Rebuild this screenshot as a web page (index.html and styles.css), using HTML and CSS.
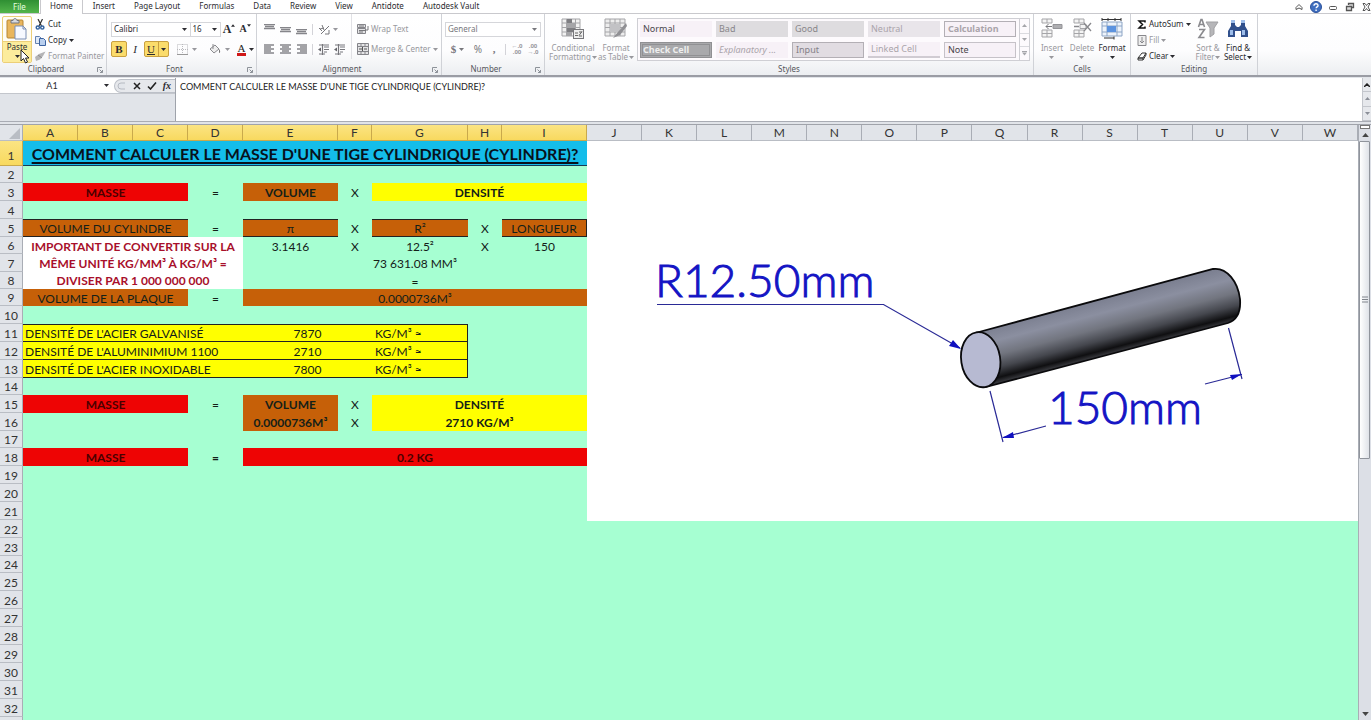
FILE: index.html
```html
<!DOCTYPE html>
<html lang="fr">
<head>
<meta charset="utf-8">
<title>Masse d'une tige cylindrique</title>
<link rel="stylesheet" href="styles.css">
</head>
<body>
<svg class="defs" aria-hidden="true">
  <symbol id="launcher" viewBox="0 0 6 6"><path d="M.5 5V.5H5M2.5 2.5l3 3M5.500 3v2.500H3" fill="none" stroke="#8d9299"/></symbol>
  <symbol id="caret" viewBox="0 0 5 3"><path d="M0 0h5L2.500 3z" fill="currentColor"/></symbol>
  <symbol id="up" viewBox="0 0 5 3"><path d="M0 3h5L2.500 0z" fill="currentColor"/></symbol>
  <symbol id="lines" viewBox="0 0 11 6"><path d="M0 .5h11M1 2.500h9M0 4.500h11" stroke="#85858a" stroke-width="1.500"/></symbol>
  <symbol id="left" viewBox="0 0 11 10"><path d="M0 1h10M0 3h7M0 5h10M0 7h7M0 9h10" stroke="#85858a" stroke-width="1.300"/></symbol>
  <symbol id="mid" viewBox="0 0 11 10"><path d="M0 1h11M2 3h7M0 5h11M2 7h7M0 9h11" stroke="#85858a" stroke-width="1.300"/></symbol>
  <symbol id="right" viewBox="0 0 11 10"><path d="M1 1h10M4 3h7M1 5h10M4 7h7M1 9h10" stroke="#85858a" stroke-width="1.300"/></symbol>
  <symbol id="indent" viewBox="0 0 12 11"><path d="M1 1h10M6 3h5M6 5.500h5M6 8h3M1 10h6M4.500 0v11" stroke="#77777c" stroke-width="1.200"/><path d="M0 5.500l3-2v4z" fill="#66666b"/></symbol>
</svg>

<header class="tabs">
  <nav class="tablist">
    <button class="tab file">File</button>
    <button class="tab active">Home</button>
    <button class="tab">Insert</button>
    <button class="tab">Page Layout</button>
    <button class="tab">Formulas</button>
    <button class="tab">Data</button>
    <button class="tab">Review</button>
    <button class="tab">View</button>
    <button class="tab">Antidote</button>
    <button class="tab">Autodesk Vault</button>
  </nav>
  <div class="winctl">
    <button aria-label="Minimize ribbon"><svg width="8" height="8"><path d="M1 4.500L4 1.500l3 3v2L4 5 1 6.500z" fill="#fff" stroke="#555"/></svg></button>
    <button aria-label="Help"><svg width="12" height="12"><circle cx="6" cy="6" r="5.500" fill="#3f6fc0" stroke="#2c519a"/><path d="M4 4.700c0-2.700 4.200-2.400 4 0C7.900 6 6.200 5.900 6.100 7.300M6.100 8.500v1.500" fill="none" stroke="#fff" stroke-width="1.400"/></svg></button>
    <button aria-label="Minimize"><svg width="9" height="8"><rect x=".5" y="3.500" width="7" height="3" rx="1" fill="#fff" stroke="#555"/></svg></button>
    <button aria-label="Restore"><svg width="10" height="10"><path d="M3.500 3V1.500h5v4H7M1.500 4.500h5v4h-5z" fill="#ddd" stroke="#555" stroke-width="1.300"/></svg></button>
    <button aria-label="Close"><svg width="9" height="8"><path d="M1 .5h2l1.500 2L6 .5h2L6 4l2 3.500H6l-1.500-2-1.500 2H1L3 4z" fill="#fff" stroke="#555"/></svg></button>
  </div>
</header>

<section class="ribbon">
  <div class="group clipboard">
    <div class="body">
      <button class="paste">
        <svg class="pasteicon" width="22" height="22" viewBox="0 0 22 22"><rect x="1" y="2" width="16" height="18" rx="1" fill="#e9b65c" stroke="#b68532"/><path d="M5 4V2.500h2C7 0 11 0 11 2.500h2V5H5z" fill="#d6d9df" stroke="#74777e"/><path d="M9 8h8l3 3v10H9z" fill="#f6f9ff" stroke="#7a8fb5"/><path d="M17 8v3h3" fill="none" stroke="#7a8fb5"/></svg>
        <span class="pastelabel">Paste<svg class="car"><use href="#caret"/></svg></span>
      </button>
      <div class="stack">
        <button class="row"><svg width="11" height="11"><path d="M3 0l3.500 7M7.500 0L4 7" stroke="#333" stroke-width="1.200"/><circle cx="2.800" cy="8.500" r="1.600" fill="none" stroke="#33639f" stroke-width="1.500"/><circle cx="7.300" cy="8.500" r="1.600" fill="none" stroke="#33639f" stroke-width="1.500"/></svg>Cut</button>
        <button class="row"><svg width="11" height="11"><path d="M.5 1.500h4l2 2v5h-6z" fill="#dfe9f7" stroke="#6582b0"/><path d="M4.500 3.500h4l2 2v5h-6z" fill="#b9cfee" stroke="#3c62a0"/></svg>Copy<svg class="car"><use href="#caret"/></svg></button>
        <button class="row off"><svg width="11" height="11"><path d="M10.500.5L8 5 5 8.500 1 10 0 6l4-3z" fill="#b4b4b6"/><path d="M3 4l4 3" stroke="#8a8a8c"/></svg>Format Painter</button>
      </div>
    </div>
    <div class="caption">Clipboard<svg class="launch"><use href="#launcher"/></svg></div>
  </div>

  <div class="group font">
    <div class="body col">
      <div class="line">
        <span class="combo name"><select aria-label="Font"><option>Calibri</option></select><svg class="car"><use href="#caret"/></svg></span><span class="combo size"><select aria-label="Font size"><option>16</option></select><svg class="car"><use href="#caret"/></svg></span>
        <button class="tool serif grow" aria-label="Increase font size">A<svg class="tiny"><use href="#up"/></svg></button>
        <button class="tool serif shrink" aria-label="Decrease font size">A<svg class="tiny"><use href="#caret"/></svg></button>
      </div>
      <div class="line">
        <button class="tool on serif"><b>B</b></button>
        <button class="tool serif"><i>I</i></button>
        <button class="tool on serif wide"><u>U</u><span class="split"><svg class="car"><use href="#caret"/></svg></span></button>
        <span class="sep"></span>
        <button class="tool w28 off" aria-label="Borders"><svg width="11" height="11"><path d="M.5.5h10v10H.5zM5.500 0v11M0 5.500h11" fill="none" stroke="#b9b9bd" stroke-dasharray="1 1"/><path d="M0 10.500h11" stroke="#999"/></svg><svg class="car"><use href="#caret"/></svg></button>
        <span class="sep"></span>
        <button class="tool w28 off" aria-label="Fill colour"><svg width="12" height="12"><path d="M1 6l5-4 4 4-5 4zM4 1v5" fill="#eee" stroke="#8a8a8e"/><path d="M10 6c2 2 1 4 0 4z" fill="#777"/></svg><svg class="car"><use href="#caret"/></svg></button>
        <button class="tool w24 serif fontcolor" aria-label="Font colour"><span>A</span><svg class="car"><use href="#caret"/></svg></button>
      </div>
    </div>
    <div class="caption">Font<svg class="launch"><use href="#launcher"/></svg></div>
  </div>

  <div class="group align">
    <div class="body">
      <div class="alignleft">
        <div class="line">
          <button class="tool" aria-label="Top"><svg width="11" height="11"><use href="#lines" width="11" height="6"/></svg></button>
          <button class="tool" aria-label="Middle"><svg width="11" height="11"><use href="#lines" y="3" width="11" height="6"/></svg></button>
          <button class="tool" aria-label="Bottom"><svg width="11" height="11"><use href="#lines" y="5" width="11" height="6"/></svg></button>
          <span class="sep"></span>
          <button class="tool w24 off" aria-label="Orientation"><svg width="11" height="11"><path d="M2 10l8-8M10 6v4H6M0 4l3 3M3 1l2 5M1 5l4-1" fill="none" stroke="#77777b"/></svg><svg class="car"><use href="#caret"/></svg></button>
        </div>
        <div class="line">
          <button class="tool" aria-label="Left"><svg width="11" height="10"><use href="#left"/></svg></button>
          <button class="tool" aria-label="Center"><svg width="11" height="10"><use href="#mid"/></svg></button>
          <button class="tool" aria-label="Right"><svg width="11" height="10"><use href="#right"/></svg></button>
          <span class="sep"></span>
          <button class="tool" aria-label="Decrease indent"><svg width="12" height="11"><use href="#indent"/></svg></button>
          <button class="tool" aria-label="Increase indent"><svg width="12" height="11"><use href="#indent"/></svg></button>
        </div>
      </div>
      <div class="alignright">
        <button class="row off"><svg width="12" height="12"><path d="M.5 1.500h8v3h-8zM.5 5.500h8v5h-8z" fill="#e4e4e6" stroke="#85858a"/><path d="M2 3h5M2 7.500h7M2 9h4M11 3v4H9" fill="none" stroke="#77777b"/></svg>Wrap Text</button>
        <button class="row off"><svg width="12" height="12"><path d="M.5.500h11v11H.5zM.5 3.500h11M.5 8.500h11M4 0v3.500M8 0v3.500M4 8.500v3M8 8.500v3" fill="#e4e4e6" stroke="#85858a"/><path d="M2 6h3M10 6H7M5.500 4v4" stroke="#555"/></svg>Merge &amp; Center<svg class="car"><use href="#caret"/></svg></button>
      </div>
    </div>
    <div class="caption">Alignment<svg class="launch"><use href="#launcher"/></svg></div>
  </div>

  <div class="group number">
    <div class="body col">
      <div class="line"><span class="combo general"><select aria-label="Number format"><option>General</option></select><svg class="car"><use href="#caret"/></svg></span></div>
      <div class="line off">
        <button class="tool w24 serif money">$<svg class="car"><use href="#caret"/></svg></button>
        <button class="tool pct">%</button>
        <button class="tool serif money">,</button>
        <span class="sep"></span>
        <button class="tool" aria-label="Increase decimal"><span class="dec"><span>←.0</span><span>.00</span></span></button>
        <button class="tool" aria-label="Decrease decimal"><span class="dec"><span>.00</span><span>→.0</span></span></button>
      </div>
    </div>
    <div class="caption">Number<svg class="launch"><use href="#launcher"/></svg></div>
  </div>

  <div class="group styles">
    <div class="body">
      <button class="big off w50"><svg width="24" height="22"><path d="M1 1h18v17H1zM1 5h18M1 9.500h18M1 14h18M5.500 1v17M14.500 1v17" fill="#f1f1f1" stroke="#a5a5a8"/><path d="M6 1h5v4H6zM6 10h8v4H6z" fill="#7e7e82"/><path d="M6 5h8v4H6zM6 14h5v4H6z" fill="#a5a5a8"/><rect x="12.500" y="11.500" width="10" height="9" fill="#eee" stroke="#77777b"/><path d="M14 15h3M14 17.500h3M18 17.500l3-4M18 14h3M18 18h3" stroke="#666"/></svg><span>Conditional<br>Formatting<svg class="car"><use href="#caret"/></svg></span></button>
      <button class="big off w38"><svg width="24" height="22"><path d="M1 1h20v17H1zM1 5h20M1 9.500h20M1 14h20M6 1v17M11 1v17M16 1v17" fill="#ededed" stroke="#a5a5a8"/><path d="M6 6h10v8H6z" fill="#c2c2c5"/><path d="M22 5l-8 9-5 6 7-3 7-9z" fill="#909094"/></svg><span>Format<br>as Table<svg class="car"><use href="#caret"/></svg></span></button>
      <div class="gallery">
        <div class="swatches">
          <button class="sw dark">Normal</button><button class="sw grey">Bad</button><button class="sw grey">Good</button><button class="sw pale">Neutral</button><button class="sw calc">Calculation</button>
          <button class="sw check">Check Cell</button><button class="sw expl">Explanatory ...</button><button class="sw input">Input</button><button class="sw linked">Linked Cell</button><button class="sw dark note">Note</button>
        </div>
        <div class="gscroll"><button aria-label="Up"><svg class="car"><use href="#up"/></svg></button><button aria-label="Down"><svg class="car"><use href="#caret"/></svg></button><button aria-label="More"><svg class="car more"><use href="#caret"/></svg></button></div>
      </div>
    </div>
    <div class="caption">Styles</div>
  </div>

  <div class="group cells">
    <div class="body">
      <button class="big off w30"><svg width="22" height="22"><path d="M1 1h10v4H1zM6 1v4M1 12h10v7H1zM6 12v7M1 15.500h10" fill="#f4f4f4" stroke="#a5a5a8"/><path d="M12 6.500h9v4h-9z" fill="#aeaeb1" stroke="#949498"/><path d="M11 8.500H5M7.500 6L5 8.500 7.500 11" fill="none" stroke="#77777b"/></svg><span>Insert<svg class="car under"><use href="#caret"/></svg></span></button>
      <button class="big off w30"><svg width="22" height="22"><path d="M3 1h10v4H3zM8 1v4M3 12h10v7H3zM8 12v7M3 15.500h10M9 6.500h6v4H9z" fill="#f4f4f4" stroke="#a5a5a8"/><path d="M13 5l7 8M20 5l-7 8M8 8.500H3" stroke="#88888c" stroke-width="1.300"/></svg><span>Delete<svg class="car under"><use href="#caret"/></svg></span></button>
      <button class="big w30"><svg width="24" height="22"><path d="M2 4h20v14H2zM2 8h20M2 14h20M7 4v14M17 4v14" fill="#edf3fb" stroke="#8da5c5"/><rect x="7" y="8" width="9" height="6" fill="#5c93df"/><path d="M2 1.500h19M2 0v3M8 0v3M15 0v3M21 0v3M4 20h10M14 18.500v3" stroke="#333"/></svg><span>Format<svg class="car under"><use href="#caret"/></svg></span></button>
    </div>
    <div class="caption">Cells</div>
  </div>

  <div class="group editing">
    <div class="body">
      <div class="stack">
        <button class="row"><svg width="10" height="9"><path d="M8 2.500V1H2l3.500 3.500L2 8h6V6.500" fill="none" stroke="#111" stroke-width="1.500"/></svg>AutoSum<svg class="car"><use href="#caret"/></svg></button>
        <button class="row off"><svg width="10" height="11"><path d="M1 .5h8v10H1zM5 2v6M3 6l2 2 2-2" fill="#eee" stroke="#88888c"/></svg>Fill<svg class="car"><use href="#caret"/></svg></button>
        <button class="row"><svg width="10" height="9"><path d="M1 6l4-5h4L6 6zM1 6h5v2H1zM6 8l3-5V1" fill="#fff" stroke="#333"/></svg>Clear<svg class="car"><use href="#caret"/></svg></button>
      </div>
      <button class="big off w30"><svg width="22" height="22"><path d="M1.500 9L4 1.500h1L7.500 9M2.500 6.500h4M2 11.500h5.500L2 19.500h5.500" fill="none" stroke="#8a8a8e" stroke-width="1.600"/><path d="M9 4h12l-4 6v6l-4 3v-9z" fill="#b6b6b9" stroke="#a0a0a3"/></svg><span>Sort &amp;<br>Filter<svg class="car"><use href="#caret"/></svg></span></button>
      <button class="big w30"><svg width="22" height="22"><path d="M4 3h4v4l2 2h2l2-2V3h4v5l3 5v6h-7v-6H8v6H1v-6l3-5z" fill="#31508c"/><path d="M4 2h4v3H4zM14 2h4v3h-4zM3 12h3v5H3zM15 12h3v5h-3z" fill="#9dbdea"/></svg><span>Find &amp;<br>Select<svg class="car"><use href="#caret"/></svg></span></button>
    </div>
    <div class="caption">Editing</div>
  </div>
  <svg class="pointer" width="10" height="16" viewBox="0 0 10 16"><path d="M1 1v11l2.500-2.500L5.500 14l2-1-2-4H9z" fill="#fff" stroke="#222"/></svg>
</section>

<section class="formulabar">
  <div class="namebox">
    <input aria-label="Name box" value="A1"><svg class="car"><use href="#caret"/></svg>
    <div class="fx">
      <svg width="10" height="8"><path d="M8 1H4a3 3 0 000 6h4" fill="#e3e6eb" stroke="#b6bac2"/></svg>
      <button aria-label="Cancel"><svg width="8" height="8"><path d="M1 1l6 6M7 1L1 7" stroke="#222" stroke-width="1.500"/></svg></button>
      <button aria-label="Enter"><svg width="10" height="8"><path d="M1 4.500L3.500 7 9 .5" fill="none" stroke="#222" stroke-width="1.600"/></svg></button>
      <button class="fxb"><i>fx</i></button>
    </div>
  </div>
  <textarea class="formula" aria-label="Formula">COMMENT CALCULER LE MASSE D'UNE TIGE CYLINDRIQUE (CYLINDRE)?</textarea>
  <div class="fscroll"><button aria-label="Collapse"><svg width="6" height="4"><path d="M0 4l3-3 3 3" fill="none" stroke="#222" stroke-width="1.500"/></svg></button><button aria-label="Up"><svg class="car"><use href="#up"/></svg></button><button aria-label="Down"><svg class="car"><use href="#caret"/></svg></button></div>
</section>

<main class="work">
  <div class="sheet">
    <table class="grid">
      <colgroup><col class="c-head"><col class="c-s"><col class="c-s"><col class="c-s"><col class="c-s"><col class="c-e"><col class="c-f"><col class="c-g"><col class="c-f"><col class="c-i"><col span="14"></colgroup>
      <thead><tr class="letters"><th class="corner"><svg width="11" height="11"><path d="M11 0v11H0z" fill="#b9bdc4"/></svg></th><th class="sel">A</th><th class="sel">B</th><th class="sel">C</th><th class="sel">D</th><th class="sel">E</th><th class="sel">F</th><th class="sel">G</th><th class="sel">H</th><th class="sel">I</th><th>J</th><th>K</th><th>L</th><th>M</th><th>N</th><th>O</th><th>P</th><th>Q</th><th>R</th><th>S</th><th>T</th><th>U</th><th>V</th><th>W</th></tr></thead>
      <tbody>
        <tr class="title"><th class="sel">1</th><td colspan="9" class="cyan">COMMENT CALCULER LE MASSE D'UNE TIGE CYLINDRIQUE (CYLINDRE)?</td><td colspan="14"></td></tr>
        <tr class="short"><th>2</th><td colspan="23"></td></tr>
        <tr><th>3</th><td colspan="3" class="red med">MASSE</td><td>=</td><td class="brown med">VOLUME</td><td>X</td><td colspan="3" class="yellow med">DENSITÉ</td><td colspan="14"></td></tr>
        <tr><th>4</th><td colspan="23"></td></tr>
        <tr><th>5</th><td colspan="3" class="brown lined">VOLUME DU CYLINDRE</td><td>=</td><td class="brown lined">π</td><td>X</td><td class="brown lined">R²</td><td>X</td><td class="brown lined edge">LONGUEUR</td><td colspan="14"></td></tr>
        <tr class="short"><th>6</th><td colspan="4" rowspan="3" class="notice">IMPORTANT DE CONVERTIR SUR LA MÊME UNITÉ KG/MM³ À KG/M³ = DIVISER PAR 1 000 000 000</td><td>3.1416</td><td>X</td><td>12.5²</td><td>X</td><td>150</td><td colspan="14"></td></tr>
        <tr><th>7</th><td colspan="5">73 631.08 MM³</td><td colspan="14"></td></tr>
        <tr class="short"><th>8</th><td colspan="5">=</td><td colspan="14"></td></tr>
        <tr class="short"><th>9</th><td colspan="3" class="brown">VOLUME DE LA PLAQUE</td><td>=</td><td colspan="5" class="brown">0.0000736M³</td><td colspan="14"></td></tr>
        <tr><th>10</th><td colspan="23"></td></tr>
        <tr class="dens first"><th>11</th><td colspan="4" class="lab">DENSITÉ DE L'ACIER GALVANISÉ</td><td colspan="2" class="val">7870</td><td class="unit">KG/M³ ≈</td><td colspan="16" class="none"></td></tr>
        <tr class="dens"><th>12</th><td colspan="4" class="lab">DENSITÉ DE L'ALUMINIMIUM 1100</td><td colspan="2" class="val">2710</td><td class="unit">KG/M³ ≈</td><td colspan="16" class="none"></td></tr>
        <tr class="dens"><th>13</th><td colspan="4" class="lab">DENSITÉ DE L'ACIER INOXIDABLE</td><td colspan="2" class="val">7800</td><td class="unit">KG/M³ ≈</td><td colspan="16" class="none"></td></tr>
        <tr class="short"><th>14</th><td colspan="23"></td></tr>
        <tr><th>15</th><td colspan="3" class="red med">MASSE</td><td>=</td><td class="brown med">VOLUME</td><td>X</td><td colspan="3" class="yellow med">DENSITÉ</td><td colspan="14"></td></tr>
        <tr><th>16</th><td colspan="4"></td><td class="brown med">0.0000736M³</td><td>X</td><td colspan="3" class="yellow med">2710 KG/M³</td><td colspan="14"></td></tr>
        <tr class="short"><th>17</th><td colspan="23"></td></tr>
        <tr><th>18</th><td colspan="3" class="red med">MASSE</td><td class="med">=</td><td colspan="5" class="red med">0.2 KG</td><td colspan="14"></td></tr>
        <tr><th>19</th><td colspan="23"></td></tr>
        <tr><th>20</th><td colspan="23"></td></tr>
        <tr><th>21</th><td colspan="23"></td></tr>
        <tr><th>22</th><td colspan="23"></td></tr>
        <tr><th>23</th><td colspan="23"></td></tr>
        <tr class="short"><th>24</th><td colspan="23"></td></tr>
        <tr><th>25</th><td colspan="23"></td></tr>
        <tr><th>26</th><td colspan="23"></td></tr>
        <tr><th>27</th><td colspan="23"></td></tr>
        <tr><th>28</th><td colspan="23"></td></tr>
        <tr><th>29</th><td colspan="23"></td></tr>
        <tr><th>30</th><td colspan="23"></td></tr>
        <tr><th>31</th><td colspan="23"></td></tr>
        <tr><th>32</th><td colspan="23"></td></tr>
        <tr><th></th><td colspan="23"></td></tr>
      </tbody>
    </table>
    <figure class="drawing">
      <svg width="771" height="380" viewBox="587 141 771 380" role="img" aria-label="Tige cylindrique R12.50mm x 150mm">
        <defs><linearGradient id="steel" gradientUnits="userSpaceOnUse" x1="1097" y1="300" x2="1111" y2="354">
          <stop offset="0" stop-color="#7b7f90"/><stop offset=".25" stop-color="#8b8fa0"/><stop offset=".5" stop-color="#72757f"/><stop offset=".72" stop-color="#45474e"/><stop offset=".9" stop-color="#0f0f11"/><stop offset="1" stop-color="#3c3d42"/></linearGradient></defs>
        <path d="M977 332.500L1213 269C1227 267 1238 282 1240 299C1241 312 1237 320 1228 323L986 387z" fill="url(#steel)" stroke="#0a0a0c" stroke-width="1.800"/>
        <ellipse cx="980.700" cy="359.700" rx="19.500" ry="27.700" transform="rotate(-9 980.700 359.700)" fill="#b7bad2" stroke="#0a0a0c" stroke-width="1.800"/>
        <g fill="none" stroke="#2a2a96" stroke-width="1.200"><path d="M657 304.500h226.500L960 348M990 391l13 51M1003 437.500l43-11.500M1228.500 328l13.500 51M1205 384l37-9.500"/></g>
        <g fill="#1010c0"><path d="M961 349l-12-3 4-6zM1002 438l11-6 1 6zM1242 374l-12 1 2 5z"/></g>
        <g class="dim"><text x="655" y="297">R12.50mm</text><text x="1048" y="424">150mm</text></g>
      </svg>
    </figure>
  </div>
  <aside class="vscroll">
    <span class="splitter"></span>
    <button aria-label="Scroll up"><svg width="7" height="4"><use href="#up"/></svg></button>
    <div class="track"><div class="thumb"><svg width="6" height="7"><path d="M0 1h6M0 3.500h6M0 6h6" stroke="#80848c"/></svg></div></div>
    <button class="down" aria-label="Scroll down"><svg width="7" height="4"><use href="#caret"/></svg></button>
  </aside>
</main>
</body>
</html>
```

FILE: styles.css
```css
* { box-sizing: border-box; }
body {
  margin: 0;
  height: 100vh;
  overflow: hidden;
  display: flex;
  flex-direction: column;
  background: #e1e4e9;
  color: #2b2b30;
  font: 8px/10px "Noto Sans", "Open Sans", sans-serif;
}
button, input, select, textarea {
  font: inherit;
  color: inherit;
  margin: 0;
  padding: 0;
  border: 0;
  background: none;
  appearance: none;
}
button { display: flex; align-items: center; justify-content: center; }
svg { display: block; flex: none; }
.defs { position: absolute; width: 0; height: 0; }
.car { width: 5px; height: 3px; }

/* Tabs */
.tabs { display: flex; justify-content: space-between; height: 14px; background: #fff; border-bottom: 1px solid #c9c9cd; flex: none; }
.tablist { display: flex; gap: 1px; }
.tab { padding: 0 9px; height: 12px; }
.tab.file { width: 39px; height: 13px; background: linear-gradient(#2f8f33, #53b54b); color: #e6ffe0; }
.tab.active { height: 14px; padding-bottom: 2px; background: #fff; border: 1px solid #c9c9cd; border-width: 0 1px; }
.winctl { display: flex; align-items: center; gap: 7px; }

/* Ribbon */
.ribbon { position: relative; display: flex; flex: none; height: 63px; background: linear-gradient(#fff 0, #fdfdfe 60%, #eceef1); border-bottom: 2px solid #9a9ca4; }
.group { display: flex; flex-direction: column; flex: none; border-right: 1px solid #d0d2d7; }
.body { display: flex; flex: 1; }
.body.col { flex-direction: column; padding: 7px 3px 0; gap: 4px; }
.caption { position: relative; height: 11px; padding-right: 14px; text-align: center; color: #55565c; }
.styles .caption, .cells .caption, .editing .caption { padding: 0; }
.launch { position: absolute; right: 3px; top: 3px; width: 6px; height: 6px; }
.off { color: #98989d; }
.line { display: flex; align-items: center; height: 16px; }
.row { gap: 2px; height: 16px; justify-content: flex-start; white-space: nowrap; }
.stack { display: flex; flex-direction: column; padding-top: 2px; }
.sep { width: 1px; height: 11px; margin: 0 3px; background: #d3d3d8; }
.tool { width: 16px; height: 16px; gap: 3px; flex: none; }
.tool.w24 { width: 25px; }
.tool.w28 { width: 28px; gap: 4px; }
.serif { font-family: "Liberation Serif", serif; font-size: 11px; }
.on { background: #fbdc6b; border: 1px solid #c9a040; border-radius: 2px; }
.combo { position: relative; display: flex; height: 15px; border: 1px solid #d5d6da; background: #fff; }
.combo select { width: 100%; padding-left: 2px; }
.combo .car { position: absolute; right: 3px; top: 5px; }

.clipboard { width: 107px; }
.clipboard .body { gap: 3px; padding: 2px 0 0 2px; }
.clipboard .stack { padding-top: 0; }
.paste { width: 30px; height: 47px; flex-direction: column; justify-content: space-between; border: 1px solid #eccf78; border-radius: 2px; background: #fffdf5; }
.pasteicon { margin-top: 1px; }
.pastelabel { width: 100%; height: 21px; display: flex; flex-direction: column; align-items: center; gap: 3px; border-top: 1px solid #eccf78; background: #fcec9c; }
.pointer { position: absolute; left: 20px; top: 35px; }

.font { width: 150px; }
.font .body { padding-left: 4px; }
.font .sep { margin: 0 2px; }
.font .name { width: 81px; }
.font .size { width: 31px; border-left: 0; }
.grow, .shrink { align-items: flex-start; gap: 0; padding-top: 3px; font-weight: bold; }
.grow { font-size: 12px; }
.shrink { font-size: 10px; }
.tiny { width: 4px; height: 3px; }
.tool.wide { width: 25px; margin-left: 1px; }
.split { display: flex; align-items: center; height: 14px; padding-left: 2px; border-left: 1px solid #c9a040; }
.fontcolor span { border-bottom: 3px solid #d01818; line-height: 10px; color: #222; padding: 0 1px; }

.align { width: 185px; }
.alignleft, .alignright { display: flex; flex-direction: column; gap: 4px; padding-top: 7px; }
.alignleft { width: 94px; padding-left: 4px; }
.alignright { border-left: 1px solid #e1e1e5; padding-left: 5px; margin-bottom: 5px; }
.number { width: 103px; }
.general { width: 96px; color: #77777c; }
.money { font-weight: bold; color: #77777c; }
.pct { font-size: 10px; color: #77777c; }
.dec { display: flex; flex-direction: column; font-size: 6px; line-height: 6px; font-weight: bold; }

.styles { width: 489px; }
.styles .body { padding-left: 4px; }
.big { flex-direction: column; justify-content: flex-start; gap: 3px; padding-top: 4px; line-height: 9px; white-space: nowrap; }
.big .car { display: inline-block; margin-left: 1px; vertical-align: middle; }
.big .car.under { display: block; margin: 4px auto 0; }
.w50 { width: 48px; }
.w38 { width: 38px; }
.w30 { width: 30px; }
.gallery { display: flex; height: 43px; margin: 4px 0 0 2px; border: 1px solid #cfcfd4; background: #fdfafd; }
.swatches { display: grid; grid-template-columns: repeat(5, 72px); gap: 4px; padding: 2px 3px 2px 2px; }
.sw { height: 16px; padding: 0 3px; justify-content: flex-start; font-size: 9px; background: #f7f1f7; color: #aaa4aa; }
.sw.dark { color: #49464b; }
.sw.grey { background: #dedcdf; color: #88868a; }
.sw.pale { background: #e9e5ea; }
.sw.calc { border: 1px solid #b3afb5; font-weight: bold; }
.sw.check { border: 3px double #909093; background: #a9a9ac; color: #eee; font-weight: bold; padding: 0; }
.sw.expl { font-style: italic; }
.sw.input { border: 1px solid #b3afb5; background: #e1dce2; color: #858087; }
.sw.linked { border-bottom: 2px solid #d0cbd2; }
.sw.note { border: 1px solid #c6c2c8; }
.gscroll { display: grid; grid-template-rows: repeat(3, 1fr); width: 10px; border-left: 1px solid #cfcfd4; color: #a5a5aa; }
.gscroll button + button { border-top: 1px solid #dadadf; }
.more { border-top: 1px solid #a5a5aa; height: 5px; }

.cells { width: 97px; }
.cells .body { padding-left: 3px; }
.editing { width: 127px; }
.editing .body { padding-left: 6px; }
.editing .stack { width: 56px; }

/* Formula bar */
.formulabar { display: flex; flex: none; height: 44px; margin-top: 1px; border-bottom: 1px solid #a9acb4; }
.namebox { display: flex; align-items: center; width: 175px; height: 16px; background: #fff; border-bottom: 1px solid #c3c6cc; }
.namebox input { width: 100px; text-align: center; flex: 1; font-family: Lato, sans-serif; font-size: 9px; min-width: 0; }
.fx { display: flex; align-items: center; justify-content: space-between; width: 61px; height: 14px; margin-left: 5px; padding: 0 4px 0 2px; border: 1px solid #bcc0c8; border-right: 0; border-radius: 7px 0 0 7px; background: #e6e8ec; }
.fxb { font: bold 10px/10px "Liberation Serif", serif; }
.formula { flex: 1; resize: none; overflow: hidden; padding: 3px 4px; border-left: 1px solid #9fa3ab; background: #fff; color: #222; font: 9px/11px Lato, sans-serif; }
.fscroll { display: grid; grid-template-rows: 14px 1fr 1fr; width: 9px; border-left: 1px solid #c3c6cc; background: #e6e8ec; color: #8b8f98; }
.fscroll button { border-bottom: 1px solid #c3c6cc; }

/* Worksheet */
.work { display: flex; flex: 1; min-height: 0; margin-top: 2px; border-top: 1px solid #a0a3aa; }
.sheet { position: relative; flex: 1; overflow: hidden; background: #a6ffd2; }
.grid { width: 100%; table-layout: fixed; border-collapse: separate; border-spacing: 0; color: #142018; font: 12px/14px Lato, sans-serif; text-align: center; }
.c-head { width: 23px; }
.c-s { width: 55px; }
.c-e { width: 95px; }
.c-f { width: 34px; }
.c-g { width: 96px; }
.c-i { width: 85px; }
.grid th, .grid td { height: 18px; padding: 2px 0 0; white-space: nowrap; }
.grid th { font-weight: 400; background: #e1e4e9; color: #333; border-right: 1px solid #a9adb5; border-bottom: 1px solid #b9bdc4; }
.grid .short th, .grid .short td { height: 17px; }
.grid .letters th { height: 16px; padding-top: 1px; }
.grid th.sel { background: linear-gradient(#fbe483, #f8d95f); border-color: #c9a94c; }
.corner svg { margin-left: 9px; }
.grid .title th, .grid .title td { height: 25px; }
.grid .title th { padding-top: 6px; }
.grid .title .cyan { background: #14bdea; border-bottom: 1px solid #163a55; color: #08121c; font-size: 16px; line-height: 22px; font-weight: 700; text-decoration: underline; text-decoration-thickness: 2px; text-underline-offset: 2px; text-decoration-skip-ink: none; }
.red { background: #ee0404; color: #4a0000; }
.brown { background: #c66008; }
.yellow { background: #ffff00; }
.med { font-weight: 700; }
.lined { border-top: 1px solid #222; border-bottom: 1px solid #222; }
.edge { border-right: 1px solid #222; }
.grid .notice { white-space: normal; background: #fff; color: #a80f2b; font-weight: 700; line-height: 17px; padding: 0 6px; }
.dens td { background: #ffff00; border-bottom: 1px solid #222; }
.dens.first td { border-top: 1px solid #222; }
.grid .dens .none { background: none; border: 0; }
.grid .dens .lab { text-align: left; padding-left: 2px; }
.grid .dens .unit { text-align: left; padding-left: 3px; border-right: 1px solid #222; }
.drawing { position: absolute; left: 587px; right: 0; top: 16px; height: 380px; margin: 0; overflow: hidden; background: #fff; }
.dim { fill: #1414c4; stroke: #1414c4; stroke-width: 1px; font: 300 46px Lato, sans-serif; }

.vscroll { display: flex; flex-direction: column; align-items: center; width: 13px; background: #dcdfe6; border-left: 1px solid #a9adb5; color: #444; }
.splitter { width: 10px; height: 4px; border: 1px solid #777; background: #fff; flex: none; }
.vscroll button { height: 12px; flex: none; }
.track { flex: 1; width: 100%; }
.thumb { display: flex; align-items: center; justify-content: center; width: 11px; height: 56%; background: linear-gradient(90deg, #fff, #dfe2e8); border: 1px solid #90949c; border-radius: 1px; }
```
